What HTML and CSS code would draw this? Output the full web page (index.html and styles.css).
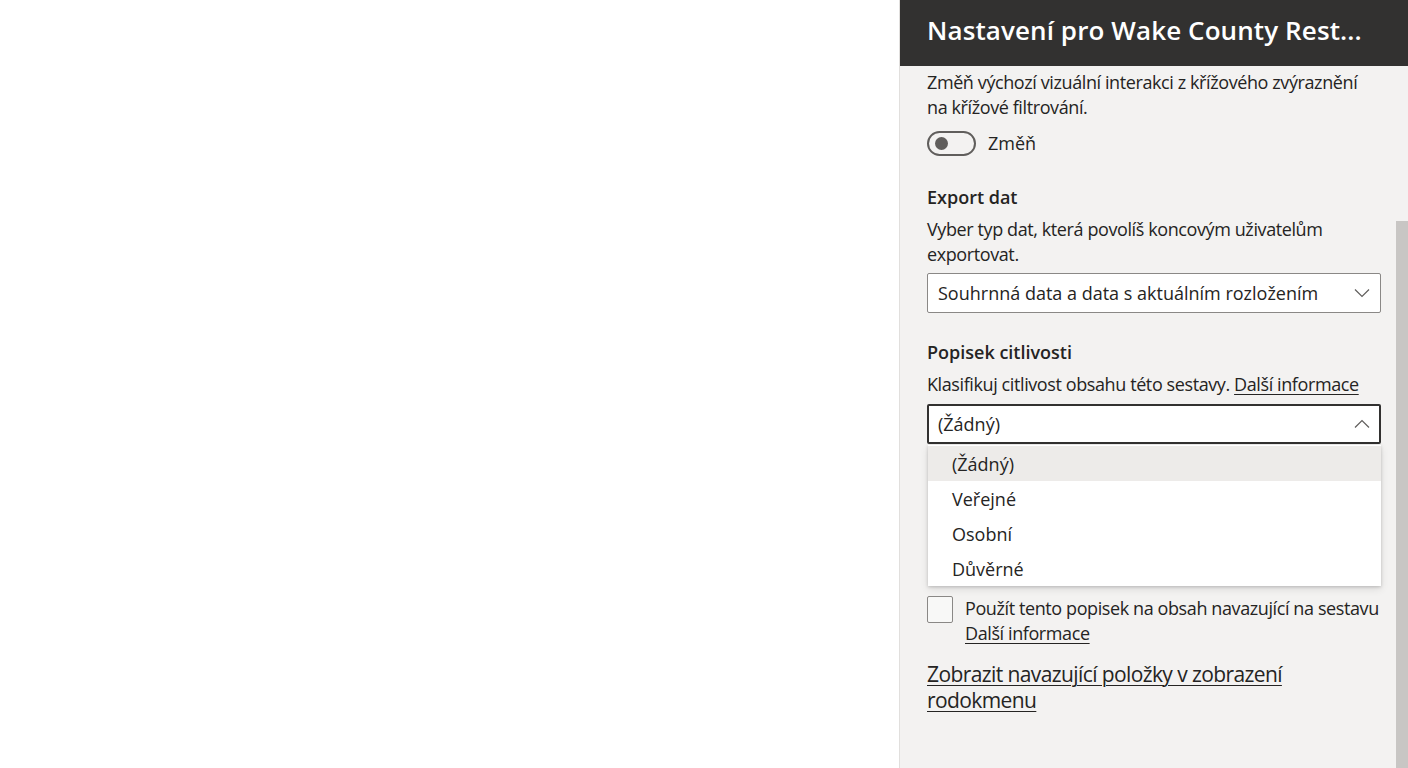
FILE: index.html
```html
<!DOCTYPE html>
<html lang="cs">
<head>
<meta charset="utf-8">
<title>Nastavení</title>
<link rel="stylesheet" href="styles.css">
</head>
<body>
<div class="canvas"></div>
<aside class="panel">
  <header class="panel-header">
    <h1 class="panel-title">Nastavení pro Wake County Rest...</h1>
  </header>
  <div class="panel-body">
    <p class="text">Změň výchozí vizuální interakci z křížového zvýraznění na křížové filtrování.</p>
    <div class="toggle-row">
      <span class="toggle"><span class="knob"></span></span>
      <span class="toggle-label">Změň</span>
    </div>

    <h2 class="section-title first">Export dat</h2>
    <p class="text desc">Vyber typ dat, která povolíš koncovým uživatelům exportovat.</p>
    <div class="dropdown">
      <span class="dropdown-value">Souhrnná data a data s aktuálním rozložením</span>
      <svg class="chev" width="16" height="10" viewBox="0 0 16 10"><path d="M1 1.5 L8 8.5 L15 1.5" fill="none" stroke="#605e5c" stroke-width="1.2"/></svg>
    </div>

    <h2 class="section-title">Popisek citlivosti</h2>
    <p class="text desc">Klasifikuj citlivost obsahu této sestavy. <a class="link" href="#">Další informace</a></p>
    <div class="dropdown-wrap">
      <div class="dropdown open">
        <span class="dropdown-value">(Žádný)</span>
        <svg class="chev" width="16" height="10" viewBox="0 0 16 10"><path d="M1 8.5 L8 1.5 L15 8.5" fill="none" stroke="#605e5c" stroke-width="1.2"/></svg>
      </div>
      <ul class="listbox">
        <li class="option selected">(Žádný)</li>
        <li class="option">Veřejné</li>
        <li class="option">Osobní</li>
        <li class="option">Důvěrné</li>
      </ul>
    </div>

    <div class="check-row">
      <span class="checkbox"></span>
      <p class="text check-text">Použít tento popisek na obsah navazující na sestavu <a class="link check-link" href="#">Další informace</a></p>
    </div>

    <a class="link big-link" href="#">Zobrazit navazující položky v zobrazení rodokmenu</a>
  </div>
  <div class="scrollbar"></div>
</aside>
</body>
</html>
```

FILE: styles.css
```css
* { box-sizing: border-box; }
html, body { margin: 0; padding: 0; }
body {
  width: 1408px;
  height: 768px;
  overflow: hidden;
  display: flex;
  font-family: "Open Sans", "Noto Sans", sans-serif;
  color: #252423;
  background: #ffffff;
}
.canvas {
  width: 899px;
  flex: none;
  background: #ffffff;
}
.panel {
  position: relative;
  flex: 1;
  background: #f3f2f1;
  border-left: 1px solid #e1dfdd;
  display: flex;
  flex-direction: column;
}
.panel-header {
  height: 66px;
  flex: none;
  background: #323130;
  padding: 0 27px 6px 27px;
  display: flex;
  align-items: center;
}
.panel-title {
  margin: 0;
  font-size: 26px;
  font-weight: 600;
  color: #ffffff;
  white-space: nowrap;
  letter-spacing: 0.1px;
}
.panel-body {
  padding: 4px 27px 0 27px;
}
.text {
  margin: 0;
  font-size: 18px;
  line-height: 25px;
  letter-spacing: -0.4px;
}
.toggle-row {
  display: flex;
  align-items: center;
  gap: 12px;
  margin-top: 11px;
  height: 25px;
}
.toggle {
  width: 49px;
  height: 25px;
  border: 2px solid #605e5c;
  border-radius: 13px;
  display: flex;
  align-items: center;
  padding-left: 6px;
}
.knob {
  width: 13px;
  height: 13px;
  border-radius: 50%;
  background: #605e5c;
}
.toggle-label {
  font-size: 18px;
  line-height: 25px;
}
.section-title {
  margin: 27px 0 0 0;
  font-size: 18px;
  line-height: 25px;
  font-weight: 600;
}
.section-title.first { margin-top: 29px; }
.desc { margin-top: 7px; }
.dropdown {
  margin-top: 6px;
  height: 40px;
  background: #ffffff;
  border: 1px solid #8a8886;
  border-radius: 2px;
  display: flex;
  align-items: center;
  justify-content: space-between;
  padding: 0 10px 0 10px;
  font-size: 18px;
}
.dropdown.open {
  border: 2px solid #323130;
  padding-left: 9px;
  padding-right: 9px;
}
.dropdown-wrap {
  position: relative;
  margin-top: 7px;
}
.dropdown-wrap .dropdown { margin-top: 0; }
.chev { flex: none; }
.listbox {
  position: absolute;
  left: 1px;
  right: 0;
  top: 41px;
  margin: 0;
  padding: 1px 0 0 0;
  list-style: none;
  background: #ffffff;
  box-shadow: 0 1px 3px rgba(0,0,0,0.18), 0 3px 8px rgba(0,0,0,0.10);
  z-index: 2;
}
.option {
  height: 35px;
  display: flex;
  align-items: center;
  padding-left: 24px;
  font-size: 18px;
}
.option.selected { background: #edebe9; }
.check-row {
  margin-top: 152px;
  margin-right: -12px;
  display: flex;
  gap: 12px;
  align-items: flex-start;
}
.checkbox {
  flex: none;
  width: 26px;
  height: 27px;
  border: 1.5px solid #8a8886;
  border-radius: 2px;
  background: #f8f8f7;
}
.check-link { display: inline-block; }
.link {
  color: #252423;
  text-decoration: underline;
  text-underline-offset: 3px;
  text-decoration-thickness: 1px;
}
.big-link {
  display: block;
  margin-top: 15px;
  font-size: 21px;
  line-height: 26px;
  letter-spacing: -0.6px;
  max-width: 400px;
}
.scrollbar {
  position: absolute;
  right: 0;
  top: 221px;
  bottom: 0;
  width: 12px;
  background: #c8c6c4;
}
```
